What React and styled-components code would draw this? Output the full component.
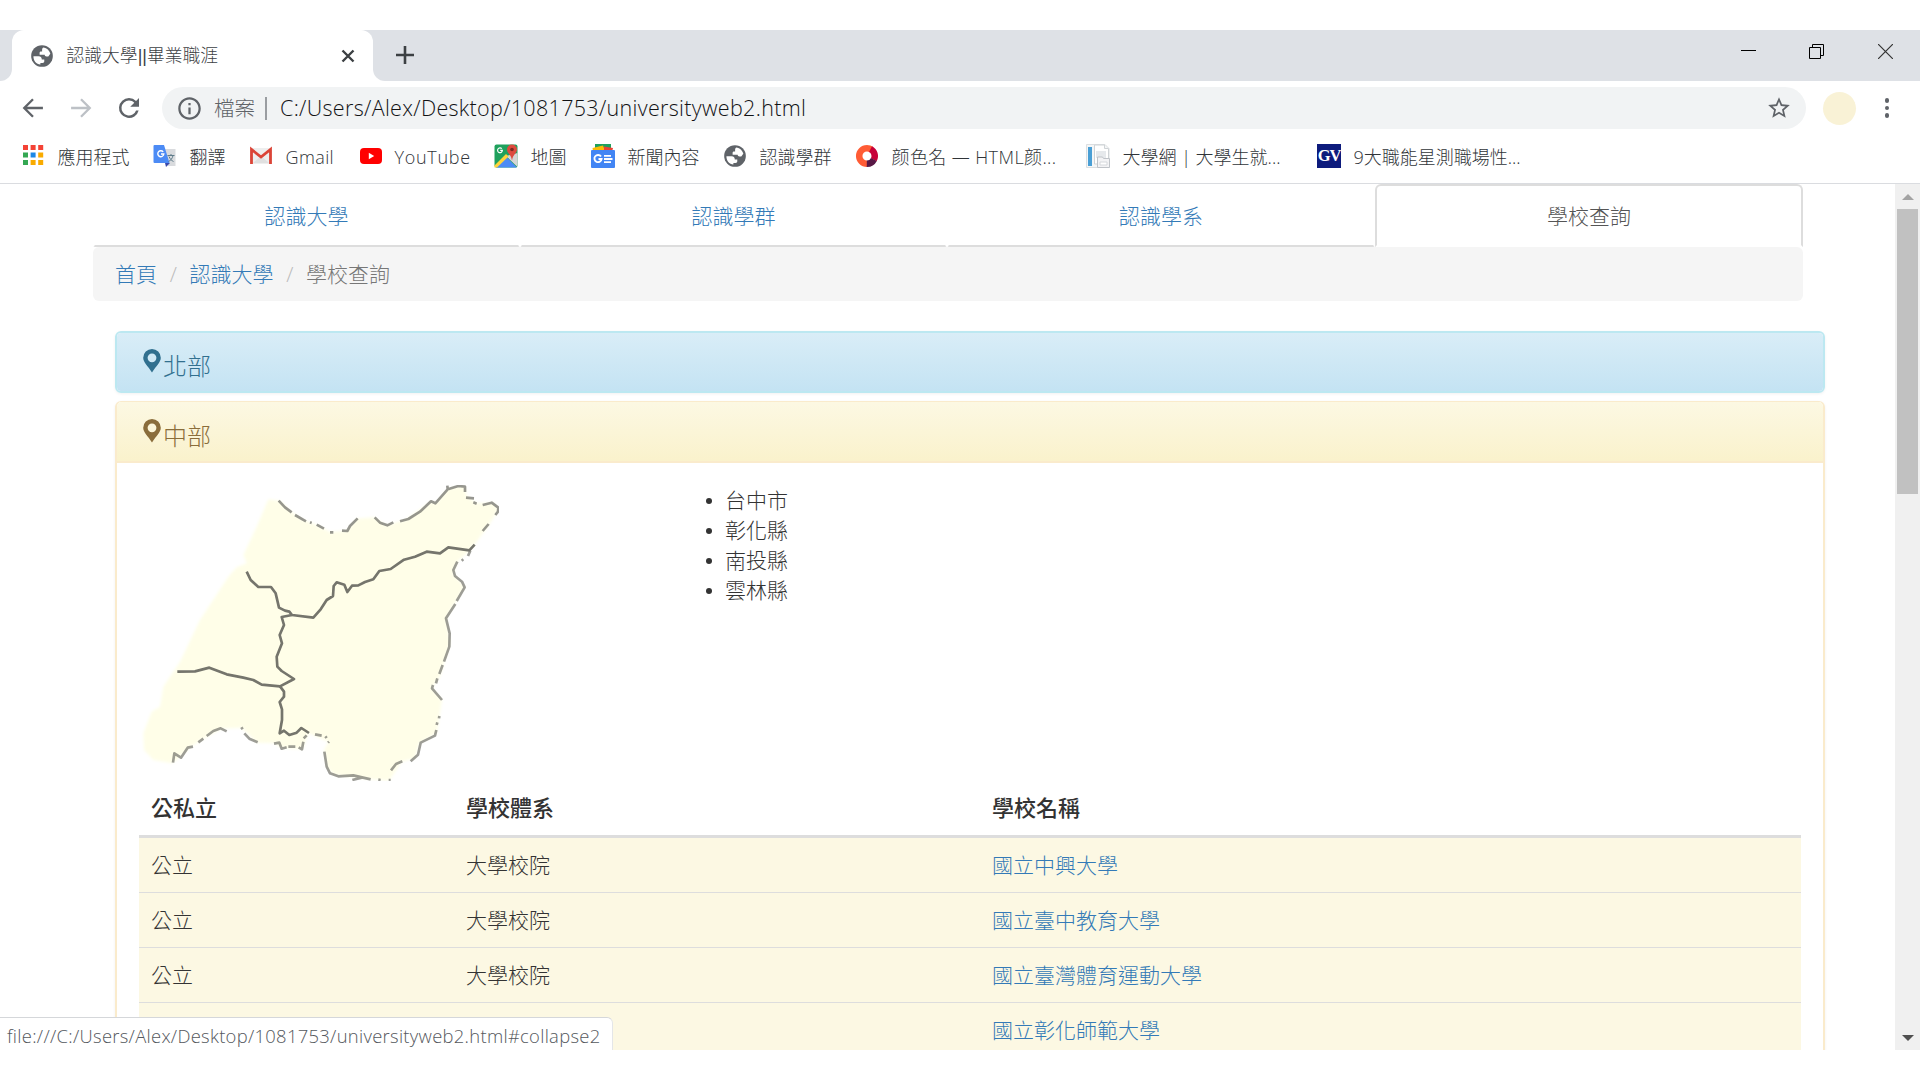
import React from "react";
import styled, { createGlobalStyle } from "styled-components";

const GlobalStyle = createGlobalStyle`
  * { box-sizing: border-box; }
  html, body { margin: 0; padding: 0; background: #fff; overflow: hidden; }
  body { font-family: "Open Sans", "Noto Sans CJK TC", sans-serif; font-weight: 300; }
  svg { display: block; flex: none; }
`;

const Screen = styled.div`
  width: 1920px;
  height: 1080px;
  padding: 30px 0;
  background: #fff;
  overflow: hidden;
`;

const Window = styled.div`
  position: relative;
  display: flex;
  flex-direction: column;
  height: 1020px;
  overflow: hidden;
`;

/* ---------- tab strip ---------- */
const TabStrip = styled.div`
  display: flex;
  height: 51px;
  background: #fff;
`;

const StripEdge = styled.div`
  width: 12px;
  background: #dee1e6;
  border-bottom-right-radius: 12px;
`;

const TabBack = styled.div`
  width: 361px;
  background: linear-gradient(#dee1e6 50%, #fff 50%);
`;

const BrowserTab = styled.div`
  display: flex;
  align-items: center;
  height: 51px;
  padding: 0 17px 0 17px;
  background: #fff;
  border-radius: 12px 12px 0 0;
  color: #3c4043;
`;

const TabTitle = styled.span`
  flex: 1;
  margin: -1px 0 0 11.5px;
  font-size: 17.8px;
  line-height: 24px;
  white-space: nowrap;
`;

const Bars = styled.span`
  font-family: "Liberation Sans", sans-serif;
`;

const StripRest = styled.div`
  display: flex;
  flex: 1;
  justify-content: space-between;
  padding: 14px 27px 0 22px;
  background: #dee1e6;
  border-bottom-left-radius: 12px;
`;

const NewTab = styled.span`
  padding-top: 1px;
`;

const WindowButtons = styled.div`
  display: grid;
  grid-template-columns: 68px 69px 15px;
`;

/* ---------- toolbar ---------- */
const Toolbar = styled.div`
  display: flex;
  align-items: center;
  height: 54px;
  padding: 0 23px 0 19px;
`;

const NavButtons = styled.div`
  display: flex;
  align-items: center;
  gap: 19.5px;
  width: 143px;
`;

const Omnibox = styled.div`
  display: flex;
  align-items: center;
  width: 1644px;
  height: 42px;
  padding: 0 14px 0 14px;
  border-radius: 21px;
  background: #f1f3f4;
`;

const Scheme = styled.span`
  box-sizing: content-box;
  width: 42px;
  padding-left: 11px;
  color: #5f6368;
  font-size: 20.5px;
  line-height: 30px;
  white-space: nowrap;
`;

const SchemeDivider = styled.span`
  width: 2px;
  height: 23px;
  margin: 0 13px 0 9px;
  background: #9a9da1;
`;

const Address = styled.span`
  flex: 1;
  color: #111214;
  font-family: "Open Sans", sans-serif;
  font-size: 21.5px;
  font-weight: 350;
  letter-spacing: 0.32px;
  line-height: 30px;
  white-space: nowrap;
`;

const Avatar = styled.span`
  width: 33px;
  height: 33px;
  margin-left: 17px;
  border-radius: 50%;
  background: #f9f2d6;
`;

const MenuDots = styled.span`
  display: flex;
  flex-direction: column;
  gap: 3px;
  margin-left: 28.5px;
  i {
    width: 4.5px;
    height: 4.5px;
    border-radius: 50%;
    background: #5f6368;
  }
`;

/* ---------- bookmarks ---------- */
const Bookmarks = styled.div`
  display: flex;
  align-items: center;
  height: 49px;
  padding: 0 0 6px 21px;
  border-bottom: 1px solid #dadce0;
`;

const Bookmark = styled.div`
  display: flex;
  align-items: center;
  gap: ${(p) => (p.$latin ? 11.5 : 12.5)}px;
  width: ${(p) => p.$w}px;
  flex: none;
  color: #303438;
  font-size: 18px;
  line-height: 26px;
  letter-spacing: ${(p) => p.$ls || 0}px;
  white-space: nowrap;
`;

const BookmarkIcon = styled.span`
  display: flex;
  justify-content: center;
  flex: none;
  width: 24px;
`;

const BookmarkLabel = styled.span`
  padding-top: 2px;
`;

/* ---------- page ---------- */
const Viewport = styled.div`
  display: flex;
  flex: 1;
  min-height: 0;
  background: #fff;
`;

const Page = styled.main`
  width: 1895px;
  height: 866px;
  padding: 0 70px 0 93px;
  overflow: hidden;
  color: #333;
  font-size: 21px;
  line-height: 30px;
`;

const Tabs = styled.nav`
  display: grid;
  grid-template-columns: 427px 427px 428px 428px;
  width: 1710px;
  height: 63px;
`;

const PageTab = styled.a`
  display: flex;
  justify-content: center;
  padding: 15px 0 0 0;
  border: 2px solid ${(p) => (p.$active ? "#ddd" : "transparent")};
  border-bottom-color: ${(p) => (p.$active ? "transparent" : "#ddd")};
  border-radius: ${(p) => (p.$active ? "6px 6px 0 0" : "2px")};
  color: ${(p) => (p.$active ? "#555" : "#337ab7")};
`;

const Breadcrumb = styled.div`
  display: flex;
  align-items: center;
  width: 1710px;
  height: 54px;
  padding: 0 22px;
  border-radius: 6px;
  background: #f5f5f5;
`;

const Crumb = styled.span`
  color: ${(p) => (p.$current ? "#777" : "#337ab7")};
`;

const Slash = styled.span`
  width: 32.5px;
  text-align: center;
  color: #bbb;
`;

const Panels = styled.div`
  display: flex;
  flex-direction: column;
  gap: 8px;
  width: 1710px;
  margin: 30px 0 0 22px;
`;

const Panel = styled.section`
  border: 2px solid ${(p) => (p.$info ? "#bce8f1" : "#faebcc")};
  border-top-width: ${(p) => (p.$info ? 2 : 1)}px;
  border-radius: 6px;
  box-shadow: 0 1px 3px rgba(0, 0, 0, 0.06);
  overflow: hidden;
`;

const PanelHeading = styled.div`
  display: flex;
  gap: 2px;
  height: ${(p) => (p.$info ? 58 : 61)}px;
  padding: ${(p) => (p.$info ? 16 : 17)}px 26px 0;
  border-bottom: ${(p) => (p.$info ? "none" : "2px solid #faebcc")};
  background: ${(p) =>
    p.$info
      ? "linear-gradient(#d9edf7, #c4e3f3)"
      : "linear-gradient(#fcf8e3, #faf2cc)"};
  color: ${(p) => (p.$info ? "#31708f" : "#8a6d3b")};
  font-size: 24px;
  line-height: 33px;
`;

const PanelBody = styled.div`
  padding: 22px 22px 0;
`;

const Region = styled.div`
  display: grid;
  grid-template-columns: 546px 1fr;
  height: 296px;
`;

const CityList = styled.ul`
  margin: 0;
  padding: 0 0 0 24px;
  list-style: none;
`;

const City = styled.li`
  display: flex;
  align-items: center;
  height: 30px;
  &::before {
    content: "";
    width: 6px;
    height: 6px;
    margin: 2px 10px 0 -3px;
    border-radius: 50%;
    background: #333;
  }
`;

const CityName = styled.span`
  padding-left: 3px;
`;

const Table = styled.div`
  width: 1662px;
`;

const Row = styled.div`
  display: grid;
  grid-template-columns: 315px 526px 1fr;
  align-items: center;
  height: ${(p) => (p.$head ? 57 : 55)}px;
  padding: 0 12px ${(p) => (p.$head ? 2 : 0)}px;
  border-bottom: ${(p) => (p.$head ? 3 : 1)}px solid #ddd;
  background: ${(p) => (p.$head ? "#fff" : "#fcf8e3")};
  font-size: ${(p) => (p.$head ? 22 : 21)}px;
  font-weight: ${(p) => (p.$head ? 500 : 300)};
`;

const SchoolLink = styled.a`
  color: #337ab7;
`;

/* ---------- scrollbar ---------- */
const Scrollbar = styled.div`
  display: flex;
  flex-direction: column;
  align-items: center;
  justify-content: space-between;
  width: 25px;
  height: 866px;
  padding: 10px 0 9px;
  background: #f0f0f0;
`;

const Thumb = styled.div`
  width: 21px;
  height: 285px;
  margin: 9px 0 auto;
  background: #c1c1c1;
`;

const StatusBubble = styled.div`
  position: absolute;
  left: 0;
  bottom: 0;
  width: 613px;
  height: 33px;
  padding: 3px 0 0 7px;
  border-top: 1px solid #d5d7da;
  border-right: 1px solid #e4e6e8;
  border-top-right-radius: 6px;
  background: #fff;
  color: #54585d;
  font-family: "Open Sans", sans-serif;
  font-size: 18.4px;
  font-weight: 350;
  line-height: 30px;
  letter-spacing: 0.3px;
  white-space: nowrap;
`;

/* ---------- drawings ---------- */
const Globe = ({ size = 26 }) => (
  <svg width={size} height={size} viewBox="0 0 24 24" fill="#5f6368">
    <circle cx="12" cy="12" r="10" />
    <path
      fill="#fff"
      d="M4.1 12.2h4.6c2.4 0 3.1 1.3 3.1 3.1h2.3v1.6c0 .9-.6 1.5-1.6 1.5h-2v1.5C6.7 19.6 3.9 16.200 4.100 12.200zM13.500 4.100c3 .6 5.300 2.700 6.200 5.600l-.7 1.200-1.200 1.500h-1.600c-1.100 0-1.700-.7-1.700-1.600H9.800V9.100c0-.9.700-1.300 1.400-1.300h.9V6.300c0-1.200.5-1.900 1.400-2.200z"
    />
  </svg>
);

const Line = ({ d, size, color, w = 2.2, box = 24 }) => (
  <svg width={size} height={size} viewBox={`0 0 ${box} ${box}`} fill="none" stroke={color} strokeWidth={w}>
    <path d={d} />
  </svg>
);

const Reload = () => (
  <svg width="30" height="30" viewBox="0 0 24 24" fill="#5f6368">
    <path d="M17.650 6.350A7.960 7.960 0 0 0 12 4a8 8 0 1 0 7.730 10h-2.080A6 6 0 1 1 12 6c1.660 0 3.140.69 4.220 1.780L13 11h7V4l-2.350 2.350z" />
  </svg>
);

const Info = () => (
  <svg width="27" height="27" viewBox="0 0 24 24" fill="#5f6368">
    <path d="M11 7h2v2h-2zm0 4h2v6h-2zm1-9C6.480 2 2 6.480 2 12s4.480 10 10 10 10-4.480 10-10S17.520 2 12 2zm0 18c-4.410 0-8-3.590-8-8s3.590-8 8-8 8 3.590 8 8-3.590 8-8 8z" />
  </svg>
);

const Star = () => (
  <svg width="26" height="26" viewBox="0 0 24 24" fill="#5f6368">
    <path d="M22 9.240l-7.190-.62L12 2 9.190 8.630 2 9.240l5.460 4.730L5.820 21 12 17.270 18.180 21l-1.630-7.030L22 9.240zM12 15.400l-3.760 2.270 1-4.280-3.320-2.880 4.380-.38L12 6.100l1.710 4.040 4.380.38-3.320 2.880 1 4.280L12 15.400z" />
  </svg>
);

const Apps = () => (
  <svg width="24" height="24" viewBox="0 0 24 24">
    {["#f44336", "#f44336", "#f44336", "#34a853", "#1e88e5", "#f9ab00", "#34a853", "#f9ab00", "#f9ab00"].map(
      (c, i) => (
        <rect key={i} x={2 + (i % 3) * 7.6} y={1 + Math.floor(i / 3) * 7.500} width="5" height="5" fill={c} />
      )
    )}
  </svg>
);

const Translate = () => (
  <svg width="24" height="24" viewBox="0 0 24 24">
    <path d="M10 5h12.500v17H15z" fill="#d9dbde" />
    <path d="M12 19h5l-4 4z" fill="#3949ab" />
    <path d="M1.500 1h9.500l5.500 18H1.500Q.5 19 .5 18V2Q.5 1 1.500 1z" fill="#4c8bf5" />
    <path d="M10.200 7.900A3 3 0 1 0 10.800 10H8" fill="none" stroke="#fff" strokeWidth="1.400" />
    <path d="M14.500 11.500h7M18 10v1.500M20 11.500c-.5 3-2.500 5-4.500 6M16 12.500c1 2.500 2.500 4 4.500 5" fill="none" stroke="#607d8b" strokeWidth="1" />
  </svg>
);

const Gmail = () => (
  <svg width="24" height="24" viewBox="0 0 24 24">
    <rect x="2" y="4" width="20" height="16" fill="#eee" />
    <path d="M4 19l8-7 8 7z" fill="#e0e0e0" />
    <path d="M2.500 20V5.500L12 13l9.500-7.500V20" fill="none" stroke="#db4437" strokeWidth="2.800" />
  </svg>
);

const YouTube = () => (
  <svg width="24" height="24" viewBox="0 0 24 24">
    <rect x="1" y="4" width="22" height="16" rx="4" fill="#f00" />
    <path d="M9.800 8.800v6.400l5.400-3.200z" fill="#fff" />
  </svg>
);

const Maps = () => (
  <svg width="24" height="24" viewBox="0 0 24 24">
    <rect x=".5" y=".5" width="23" height="23" rx="2" fill="#1fa15d" />
    <path d="M23.500 9v14L12 12z" fill="#d5d5d5" />
    <path d="M2 23.500L12.500 13 23 23.500z" fill="#4c8bf5" />
    <path d="M.5 21.500L12 10l2.500 2.500L3 23.500H.5z" fill="#ffd43b" />
    <path d="M18 .5a5 5 0 0 1 5 5c0 4-4 4.500-5 11-1-6.500-5-7-5-11a5 5 0 0 1 5-5z" fill="#dd4b3e" />
    <circle cx="18" cy="5.500" r="1.800" fill="#7c2a21" />
    <path d="M7.800 4.700A2.400 2.400 0 1 0 8.400 6.300H6.200" fill="none" stroke="#fff" strokeWidth="1.200" />
  </svg>
);

const News = () => (
  <svg width="24" height="24" viewBox="0 0 24 24">
    <path d="M4 0h16v5H4z" fill="#1fa15d" />
    <path d="M1.500 4L12 1.500 14 7H2z" fill="#fbbc04" />
    <path d="M13 2.500l9 1.500-1 4h-8z" fill="#ea4335" />
    <rect x="0" y="6" width="24" height="18" rx="1" fill="#4285f4" />
    <path d="M10 12.500A3.600 3.600 0 1 0 10.600 15H7.500" fill="none" stroke="#fff" strokeWidth="1.900" />
    <path d="M13 11.800h7M13 15h8.500M13 18.200h7" stroke="#fff" strokeWidth="1.800" />
  </svg>
);

const Ring = () => (
  <svg width="24" height="24" viewBox="0 0 24 24" fill="none" strokeWidth="6.500">
    <path d="M12 19.800A7.800 7.800 0 0 1 12 4.200 7.800 7.800 0 0 1 16.500 5.700" stroke="#ff5c35" />
    <path d="M15.500 5.100A7.800 7.800 0 0 1 18.800 15.800" stroke="#c70039" />
    <path d="M18.900 15.500A7.800 7.800 0 0 1 11.800 19.800" stroke="#581845" />
  </svg>
);

const PageIcon = () => (
  <svg width="24" height="24" viewBox="0 0 24 24">
    <path d="M.5.5H19l4 4v19H.5z" fill="#f4f6f7" stroke="#dcdfe1" />
    <rect x="2" y="3" width="4" height="19" fill="#4a9fd5" />
    <path d="M8.500 1h10v3.500h4V20h-14z" fill="#fff" stroke="#cfd3d6" />
    <rect x="10" y="7" width="10" height="7" fill="#e6e9ec" />
    <path d="M11.500 13h5l1 1.500h6v9h-12z" fill="#f3f3f5" stroke="#bfc3c8" />
    <path d="M14 18h7v3h-7z" fill="#fff" stroke="#d5d8dc" />
  </svg>
);

const GVBox = styled.span`
  display: flex;
  align-items: center;
  justify-content: center;
  flex: none;
  width: 24px;
  height: 24px;
  background: #0d1b7c;
  color: #fff;
  font: 700 16.5px/24px "Liberation Serif", serif;
  letter-spacing: -1px;
`;

const Pin = () => (
  <svg width="18" height="24" viewBox="0 0 18 24" fill="currentColor">
    <path
      fillRule="evenodd"
      d="M9 0a8.800 8.800 0 0 1 8.800 8.800C17.800 13.500 13 17 9 23.500 5 17 .2 13.500.2 8.800A8.800 8.800 0 0 1 9 0zM9 4.400a4.400 4.400 0 1 0 0 8.800A4.400 4.400 0 0 0 9 4.400z"
    />
  </svg>
);

const CentralMap = () => (
  <svg width="360" height="296" viewBox="117 75 1080 888">
    <defs>
      <filter id="soft" x="-5%" y="-5%" width="110%" height="110%">
        <feGaussianBlur stdDeviation="2.200" />
      </filter>
      <filter id="softer" x="-5%" y="-5%" width="110%" height="110%">
        <feGaussianBlur stdDeviation="4" />
      </filter>
    </defs>
    <path
      filter="url(#softer)"
      fill="#fffee8"
      d="M505 118L540 122 570 152 610 180 650 195 690 216 740 212 770 176 822 172 860 196 920 178 990 125 1008 130 1046 84 1095 78 1100 108 1130 130 1180 128 1197 148 1160 205 1112 270 1072 305 1060 342 1094 380 1040 474 1050 550 1020 650 996 684 1026 720 1010 820 958 850 945 895 905 905 868 962 780 955 700 944 680 920 672 870 686 845 625 820 608 868 545 864 525 850 470 848 425 803 365 806 325 828 270 862 240 892 215 910 160 900 132 870 130 820 155 755 180 740 190 680 240 605 300 480 385 350 410 322 440 310 430 285 470 200z"
    />
    <g filter="url(#soft)" fill="none" stroke="#74746c" strokeWidth="8" strokeLinejoin="round">
      <path d="M440 335L452 360 475 381 513 381 527 400 537 443 555 452 568 455 576 465 640 473 662 448 680 420 699 408 701 378 710 367 733 374 742 396 756 377 775 376 795 366 820 358 838 333 872 327 912 299 945 290 980 275 1020 280 1045 262 1108 271 1124 254" />
      <path d="M576 465L545 471 552 495 539 525 546 550 530 590 532 620 545 633 582 657 540 679 485 674 460 660 430 653 380 643 328 623 285 634 232 635" />
      <path d="M540 679L552 695 552 710 539 726 546 748 546 780 539 820 552 812 568 825 590 818 604 804 627 819" />
      <path strokeOpacity=".75" d="M536 122L555 142 575 157M585 165L618 184M630 187L635 189M650 194L672 206M690 217L700 217M726 212L742 213 750 198 773 175M824 172L840 188 862 196 880 187M900 184L925 177 960 155 993 124 1006 130 1043 88 1042 77M1046 87L1075 78 1095 80 1095 96M1098 113L1122 115M1120 127L1130 131M1148 135L1175 128 1195 143 1194 155 1186 165M1166 192L1148 213" />
      <path strokeOpacity=".7" d="M1111 272L1104 288M1090 298L1085 302M1072 305L1060 330 1065 348 1086 365 1094 382 1070 423M1066 432L1038 475 1049 520 1048 560 1032 605M1028 615L1018 642M1012 655L1008 670M999 675L996 685 1026 720M1018 768L1017 775M1012 787L1010 795M1009 810L1005 827 962 848 954 884 932 904M907 904L888 912 873 931M866 960L872 960M835 959L842 960" />
      <path strokeOpacity=".7" d="M812 958L760 946 715 949 690 940 680 920 673 875M687 845L684 848M680 834L676 829M665 827L645 823M620 826L611 835M610 845L606 868 596 862M586 860L565 860M560 862L545 866 538 848 522 851M473 847L448 836 433 820M428 808L424 802M380 814L362 805 340 813 320 828M310 836L295 847M279 860L263 863 243 893 223 880 219 908M757 960L785 953" />
    </g>
  </svg>
);

const bookmarks = [
  { w: 132, icon: <Apps />, label: "應用程式" },
  { w: 96, icon: <Translate />, label: "翻譯" },
  { w: 110, icon: <Gmail />, label: "Gmail", ls: 0.4 },
  { w: 135, icon: <YouTube />, label: "YouTube", ls: 0.7, latin: true },
  { w: 97, icon: <Maps />, label: "地圖" },
  { w: 132, icon: <News />, label: "新聞內容" },
  { w: 132, icon: <Globe size={26} />, label: "認識學群" },
  { w: 231, icon: <Ring />, label: "颜色名 — HTML颜...", ls: 0.4 },
  { w: 231, icon: <PageIcon />, label: "大學網 | 大學生就..." },
  { w: 220, icon: <GVBox>GV</GVBox>, label: "9大職能星測職場性..." },
];

const cities = ["台中市", "彰化縣", "南投縣", "雲林縣"];
const schools = [
  { kind: "公立", system: "大學校院", name: "國立中興大學" },
  { kind: "公立", system: "大學校院", name: "國立臺中教育大學" },
  { kind: "公立", system: "大學校院", name: "國立臺灣體育運動大學" },
  { kind: "", system: "", name: "國立彰化師範大學" },
];
const tabs = ["認識大學", "認識學群", "認識學系", "學校查詢"];

export default function App() {
  return (
    <Screen>
      <GlobalStyle />
      <Window>
        <TabStrip>
          <StripEdge />
          <TabBack>
            <BrowserTab>
              <Globe />
              <TabTitle>
                認識大學<Bars>||</Bars>畢業職涯
              </TabTitle>
              <Line size={16} box={16} w={2.4} color="#3c4043" d="M2.500 2.500l11 11M13.500 2.500l-11 11" />
            </BrowserTab>
          </TabBack>
          <StripRest>
            <NewTab>
              <Line size={20} box={20} w={2.6} color="#3c4043" d="M10 1v18M1 10h18" />
            </NewTab>
            <WindowButtons>
              <Line size={15} box={15} w={1} color="#000" d="M0 6.500h15" />
              <Line size={15} box={15} w={1} color="#000" d="M.5 3.500h11v11H.5zM3.500 3.500v-3h11v11h-3" />
              <Line size={15} box={15} w={1.200} color="#333" d="M0 0l15 15M15 0L0 15" />
            </WindowButtons>
          </StripRest>
        </TabStrip>

        <Toolbar>
          <NavButtons>
            <Line size={28} color="#5f6368" w={2} d="M20.500 12H4.500M12 4.500L4.500 12l7.500 7.500" />
            <Line size={28} color="#bdc1c6" w={2} d="M3.500 12h16M12 4.500l7.500 7.500-7.500 7.500" />
            <Reload />
          </NavButtons>
          <Omnibox>
            <Info />
            <Scheme>檔案</Scheme>
            <SchemeDivider />
            <Address>C:/Users/Alex/Desktop/1081753/universityweb2.html</Address>
            <Star />
          </Omnibox>
          <Avatar />
          <MenuDots>
            <i />
            <i />
            <i />
          </MenuDots>
        </Toolbar>

        <Bookmarks>
          {bookmarks.map((b) => (
            <Bookmark key={b.label} $w={b.w} $ls={b.ls} $latin={b.latin}>
              <BookmarkIcon>{b.icon}</BookmarkIcon>
              <BookmarkLabel>{b.label}</BookmarkLabel>
            </Bookmark>
          ))}
        </Bookmarks>

        <Viewport>
          <Page>
            <Tabs>
              {tabs.map((t, i) => (
                <PageTab key={t} $active={i === 3}>
                  {t}
                </PageTab>
              ))}
            </Tabs>
            <Breadcrumb>
              <Crumb>首頁</Crumb>
              <Slash>/</Slash>
              <Crumb>認識大學</Crumb>
              <Slash>/</Slash>
              <Crumb $current>學校查詢</Crumb>
            </Breadcrumb>
            <Panels>
              <Panel $info>
                <PanelHeading $info>
                  <Pin />
                  <span>北部</span>
                </PanelHeading>
              </Panel>
              <Panel>
                <PanelHeading>
                  <Pin />
                  <span>中部</span>
                </PanelHeading>
                <PanelBody>
                  <Region>
                    <CentralMap />
                    <CityList>
                      {cities.map((c) => (
                        <City key={c}>
                          <CityName>{c}</CityName>
                        </City>
                      ))}
                    </CityList>
                  </Region>
                  <Table>
                    <Row $head>
                      <span>公私立</span>
                      <span>學校體系</span>
                      <span>學校名稱</span>
                    </Row>
                    {schools.map((s) => (
                      <Row key={s.name}>
                        <span>{s.kind}</span>
                        <span>{s.system}</span>
                        <SchoolLink>{s.name}</SchoolLink>
                      </Row>
                    ))}
                  </Table>
                </PanelBody>
              </Panel>
            </Panels>
          </Page>
          <Scrollbar>
            <svg width="12" height="6" viewBox="0 0 12 6">
              <path d="M0 6L6 0l6 6z" fill="#a3a3a3" />
            </svg>
            <Thumb />
            <svg width="12" height="6" viewBox="0 0 12 6">
              <path d="M0 0h12L6 6z" fill="#505050" />
            </svg>
          </Scrollbar>
        </Viewport>
        <StatusBubble>file:///C:/Users/Alex/Desktop/1081753/universityweb2.html#collapse2</StatusBubble>
      </Window>
    </Screen>
  );
}
